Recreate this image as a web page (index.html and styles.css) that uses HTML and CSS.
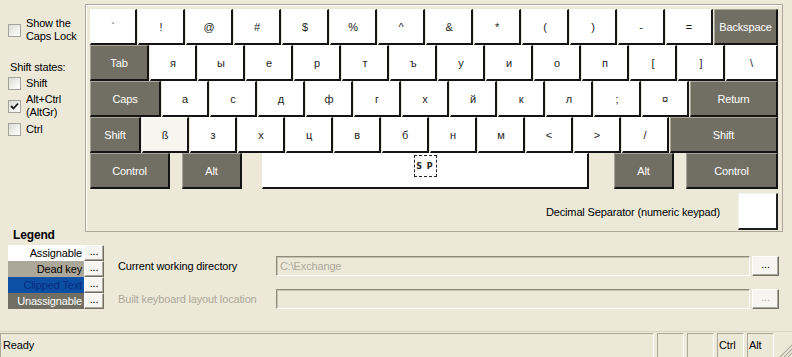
FILE: index.html
```html
<!DOCTYPE html>
<html lang="en">
  <head>
    <meta charset="UTF-8" />
    <title>Keyboard Layout Creator</title>
    <link rel="stylesheet" href="styles.css">
  </head>
  <body>
    <div class="app">
      <div class="top">
        <div class="side">
          <label class="check">
            <span class="box"></span>
            <span>Show the<br />Caps Lock</span>
          </label>
          <div class="side-title">Shift states:</div>
          <label class="check check-shift">
            <span class="box"></span>
            <span>Shift</span>
          </label>
          <label class="check check-altgr">
            <span class="box">
              <svg width="11" height="11" viewBox="0 0 11 11">
                <polyline points="2,5 4.5,7.5 9,2.5" fill="none" stroke="#1b1b1b" stroke-width="1.8" />
              </svg>
            </span>
            <span>Alt+Ctrl<br />(AltGr)</span>
          </label>
          <label class="check check-ctrl">
            <span class="box"></span>
            <span>Ctrl</span>
          </label>
        </div>

        <div class="keyboard">
          <div class="row">
            <div class="key">`</div>
            <div class="key">!</div>
            <div class="key">@</div>
            <div class="key">#</div>
            <div class="key">$</div>
            <div class="key">%</div>
            <div class="key">^</div>
            <div class="key">&amp;</div>
            <div class="key">*</div>
            <div class="key">(</div>
            <div class="key">)</div>
            <div class="key">-</div>
            <div class="key">=</div>
            <div class="key mod w-back">Backspace</div>
          </div>
          <div class="row">
            <div class="key mod w-tab">Tab</div>
            <div class="key">я</div>
            <div class="key">ы</div>
            <div class="key">е</div>
            <div class="key">р</div>
            <div class="key">т</div>
            <div class="key">ъ</div>
            <div class="key">у</div>
            <div class="key">и</div>
            <div class="key">о</div>
            <div class="key">п</div>
            <div class="key">[</div>
            <div class="key">]</div>
            <div class="key w-bslash">\</div>
          </div>
          <div class="row">
            <div class="key mod w-caps">Caps</div>
            <div class="key">а</div>
            <div class="key">с</div>
            <div class="key">д</div>
            <div class="key">ф</div>
            <div class="key">г</div>
            <div class="key">х</div>
            <div class="key">й</div>
            <div class="key">к</div>
            <div class="key">л</div>
            <div class="key">;</div>
            <div class="key">¤</div>
            <div class="key mod w-return">Return</div>
          </div>
          <div class="row">
            <div class="key mod w-lshift">Shift</div>
            <div class="key soft">ß</div>
            <div class="key">з</div>
            <div class="key">х</div>
            <div class="key">ц</div>
            <div class="key">в</div>
            <div class="key">б</div>
            <div class="key">н</div>
            <div class="key">м</div>
            <div class="key">&lt;</div>
            <div class="key">&gt;</div>
            <div class="key">/</div>
            <div class="key mod w-rshift">Shift</div>
          </div>
          <div class="row row-bottom">
            <div class="key mod w-lctrl">Control</div>
            <div class="key mod w-lalt">Alt</div>
            <div class="key w-space"><span class="sp">S P</span></div>
            <div class="key mod w-ralt">Alt</div>
            <div class="key mod w-rctrl">Control</div>
          </div>
          <div class="decimal">
            <span>Decimal Separator (numeric keypad)</span>
            <div class="dec-key"></div>
          </div>
        </div>
      </div>

      <div class="lower">
        <div class="legend">
          <div class="legend-title">Legend</div>
          <div class="legend-row">
            <div class="swatch sw-assign">Assignable</div>
            <div class="btn">...</div>
          </div>
          <div class="legend-row">
            <div class="swatch sw-dead">Dead key</div>
            <div class="btn">...</div>
          </div>
          <div class="legend-row">
            <div class="swatch sw-clip">Clipped Text</div>
            <div class="btn">...</div>
          </div>
          <div class="legend-row">
            <div class="swatch sw-unassign">Unassignable</div>
            <div class="btn">...</div>
          </div>
        </div>

        <div class="paths">
          <div class="path-row">
            <div class="path-label">Current working directory</div>
            <div class="field">C:\Exchange</div>
            <div class="btn btn-path">...</div>
          </div>
          <div class="path-row disabled">
            <div class="path-label">Built keyboard layout location</div>
            <div class="field"></div>
            <div class="btn btn-path">...</div>
          </div>
        </div>
      </div>

      <div class="status">
        <div class="panel panel-main">Ready</div>
        <div class="panel"></div>
        <div class="panel"></div>
        <div class="panel">Ctrl</div>
        <div class="panel">Alt</div>
        <svg class="grip" width="13" height="13" viewBox="0 0 13 13">
          <path d="M12 1 L1 12 M12 5 L5 12 M12 9 L9 12" stroke="#fff" stroke-width="1" />
          <path d="M13 1 L1 13 M13 5 L5 13 M13 9 L9 13" stroke="#ACA899" stroke-width="1.2" />
        </svg>
      </div>
    </div>
  </body>
</html>
```

FILE: styles.css
```css
body {
  margin: 0;
  background: #ece9d8;
  font-family: "Liberation Sans", Arial, sans-serif;
  font-size: 11px;
  letter-spacing: -0.15px;
  color: #000;
}

.app {
  height: 357px;
  display: flex;
  flex-direction: column;
  padding-top: 4px;
  box-sizing: border-box;
  overflow: hidden;
}

.top {
  display: flex;
}

/* left options column */
.side {
  width: 85px;
  padding: 13px 0 0 8px;
  box-sizing: border-box;
}

.check {
  display: flex;
  align-items: center;
  gap: 5px;
  line-height: 13px;
}

.box {
  width: 13px;
  height: 13px;
  box-sizing: border-box;
  border: 1px solid #a3a39c;
  background: linear-gradient(135deg, #dcdcd5, #fff);
  display: flex;
  align-items: center;
  justify-content: center;
  flex-shrink: 0;
}

.side-title {
  margin-top: 18px;
  padding-left: 2px;
  line-height: 13px;
}

.check-shift {
  margin-top: 3px;
}

.check-altgr {
  margin-top: 3px;
}

.check-ctrl {
  margin-top: 4px;
}

/* keyboard frame */
.keyboard {
  width: 698px;
  height: 228px;
  box-sizing: border-box;
  border: 1px solid #aca899;
  box-shadow: inset 1px 1px 0 #fff;
  padding: 4px 0 0 4px;
}

.row {
  display: flex;
  gap: 1px;
  height: 36px;
}

.key {
  width: 47px;
  height: 36px;
  box-sizing: border-box;
  background: #fff;
  border-top: 1px solid #fff;
  border-left: 1px solid #fff;
  border-right: 2px solid #141414;
  border-bottom: 2px solid #141414;
  display: flex;
  align-items: center;
  justify-content: center;
  color: #1e1e1e;
  flex-shrink: 0;
}

.key.mod {
  background: #716f64;
  color: #fff;
  border-top-color: #a9a69a;
  border-left-color: #a9a69a;
}

.key.soft {
  background: #f6f5f0;
}

.w-back { width: 64px; }
.w-tab { width: 59px; }
.w-bslash { width: 52px; }
.w-caps { width: 71px; }
.w-return { width: 88px; }
.w-lshift { width: 51px; }
.w-rshift { width: 108px; }

.row-bottom {
  gap: 0;
}

.w-lctrl { width: 80px; }
.w-lalt { width: 60px; margin-left: 12px; }
.w-space {
  width: 327px;
  margin-left: 20px;
  align-items: flex-start;
  padding-top: 1px;
}
.w-ralt { width: 60px; margin-left: 25px; }
.w-rctrl { width: 92px; margin-left: 12px; }

.sp {
  width: 23px;
  height: 22px;
  box-sizing: border-box;
  border: 1px dashed #222;
  font-family: "DejaVu Sans", sans-serif;
  font-size: 8px;
  font-weight: bold;
  letter-spacing: 1px;
  display: flex;
  align-items: center;
  justify-content: center;
}

.decimal {
  display: flex;
  justify-content: flex-end;
  align-items: center;
  gap: 18px;
  width: 688px;
  margin-top: 4px;
}

.dec-key {
  width: 40px;
  height: 37px;
  box-sizing: border-box;
  background: #fff;
  border-top: 1px solid #f2f1ea;
  border-left: 1px solid #f2f1ea;
  border-right: 2px solid #1e1e1e;
  border-bottom: 2px solid #1e1e1e;
}

/* legend + paths */
.lower {
  display: flex;
  margin-top: -4px;
}

.legend {
  width: 104px;
  padding-left: 8px;
  box-sizing: border-box;
}

.legend-title {
  font-size: 12px;
  font-weight: bold;
  line-height: 14px;
  padding-left: 5px;
  margin-bottom: 3px;
}

.legend-row {
  display: flex;
  height: 16px;
}

.swatch {
  width: 76px;
  text-align: right;
  padding-right: 2px;
  box-sizing: border-box;
  line-height: 16px;
}

.sw-assign { background: #fff; }
.sw-dead { background: #aca899; }
.sw-clip { background: #0b50a4; color: #0a2a80; }
.sw-unassign { background: #716f64; color: #fff; }

.btn {
  width: 20px;
  height: 16px;
  box-sizing: border-box;
  background: #f6f5f1;
  border: 1px solid #fff;
  border-right-color: #716f64;
  border-bottom-color: #716f64;
  box-shadow: inset -1px -1px 0 #aca899;
  text-align: center;
  line-height: 11px;
  font-size: 11px;
}

.paths {
  padding: 28px 0 0 14px;
}

.path-row {
  display: flex;
  align-items: center;
  height: 20px;
}

.path-row + .path-row {
  margin-top: 13px;
}

.path-label {
  width: 158px;
}

.field {
  width: 474px;
  height: 20px;
  box-sizing: border-box;
  border: 1px solid;
  border-color: #8e8b7c #fff #fff #8e8b7c;
  box-shadow: inset 1px 1px 0 #c7c4b6;
  color: #aca899;
  padding: 3px 0 0 3px;
}

.btn-path {
  width: 27px;
  height: 20px;
  margin-left: 2px;
  line-height: 15px;
}

.disabled .path-label,
.disabled .btn {
  color: #aca899;
}

/* status bar */
.status {
  margin-top: auto;
  height: 26px;
  display: flex;
  gap: 3px;
  padding-top: 1px;
  box-sizing: border-box;
  border-top: 1px solid #d8d5c6;
  position: relative;
}

.panel {
  width: 27px;
  height: 25px;
  box-sizing: border-box;
  border: 1px solid;
  border-color: #aca899 #fff #fff #aca899;
  line-height: 23px;
  padding-left: 1px;
}

.panel-main {
  width: 654px;
  padding-left: 2px;
}

.grip {
  position: absolute;
  right: 0;
  bottom: 0;
}
```
